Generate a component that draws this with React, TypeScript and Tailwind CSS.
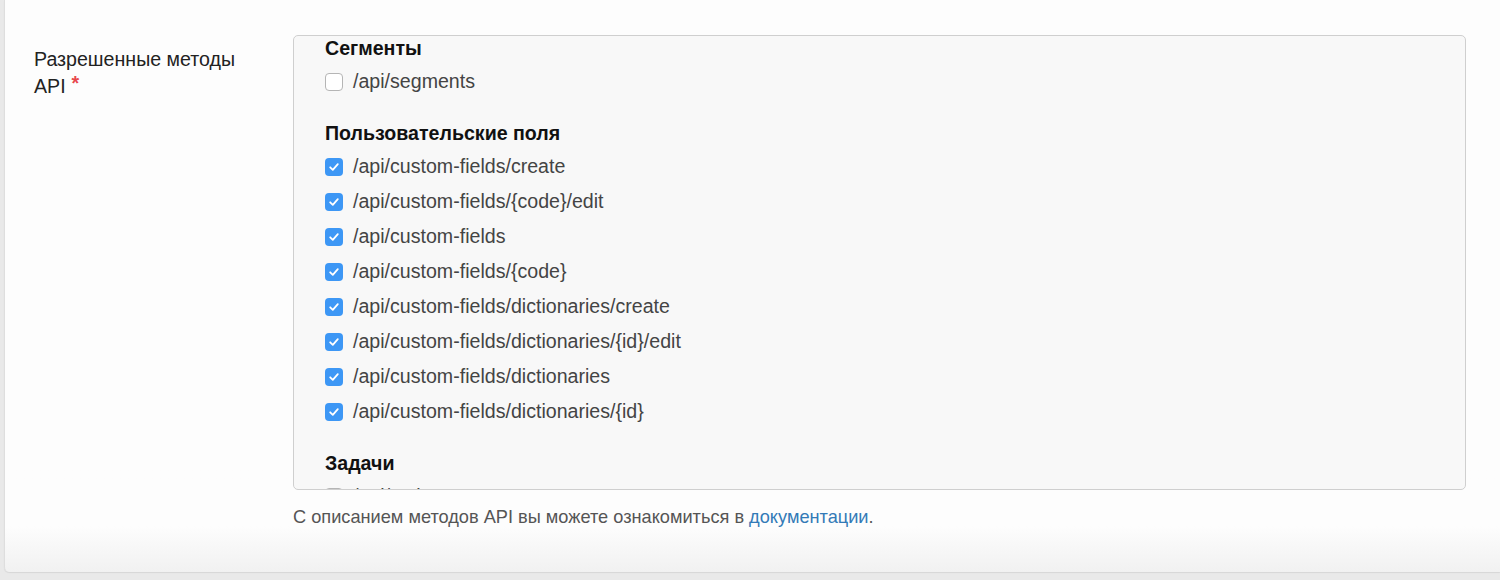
import React from 'react';

interface Group {
  title: string;
  items: { path: string; checked: boolean }[];
}

const groups: Group[] = [
  {
    title: 'Сегменты',
    items: [{ path: '/api/segments', checked: false }],
  },
  {
    title: 'Пользовательские поля',
    items: [
      { path: '/api/custom-fields/create', checked: true },
      { path: '/api/custom-fields/{code}/edit', checked: true },
      { path: '/api/custom-fields', checked: true },
      { path: '/api/custom-fields/{code}', checked: true },
      { path: '/api/custom-fields/dictionaries/create', checked: true },
      { path: '/api/custom-fields/dictionaries/{id}/edit', checked: true },
      { path: '/api/custom-fields/dictionaries', checked: true },
      { path: '/api/custom-fields/dictionaries/{id}', checked: true },
    ],
  },
  {
    title: 'Задачи',
    items: [{ path: '/api/tasks', checked: false }],
  },
];

const CheckBox: React.FC<{ checked: boolean }> = ({ checked }) => {
  if (checked) {
    return (
      <span className="flex h-[18px] w-[18px] shrink-0 items-center justify-center rounded-[4px] bg-[#3d97f5]">
        <svg width="12" height="12" viewBox="0 0 12 12" fill="none">
          <path d="M2.2 6.3 L4.8 8.8 L9.8 3.2" stroke="#fff" strokeWidth="1.8" strokeLinecap="round" strokeLinejoin="round" />
        </svg>
      </span>
    );
  }
  return <span className="h-[18px] w-[18px] shrink-0 rounded-[4px] border border-[#b5b5b5] bg-white" />;
};

const App: React.FC = () => {
  return (
    <div className="h-[580px] overflow-hidden bg-[#e9e9e9] pl-[4px] font-['Liberation_Sans',Arial,sans-serif]">
      <div className="flex h-[572px] rounded-bl-[5px] border-l border-[#dedede] bg-gradient-to-b from-[#fdfdfd] from-[92%] to-[#f1f1f1] pl-[29px] shadow-[0_1px_1px_rgba(0,0,0,0.08)]">
        <div className="w-[259px] shrink-0 pt-[46px]">
          <div className="w-[228px] text-[19.6px] leading-[27px] text-[#222]">
            Разрешенные методы API
            <span className="ml-[6px] inline-block align-top text-[19.6px] leading-[20px] font-bold text-[#e8474c]">*</span>
          </div>
        </div>

        <div className="pt-[35px]">
          <div className="h-[455px] w-[1173px] overflow-hidden rounded-[5px] border border-[#cfcfcf] bg-[#f8f8f8] pl-[31px]">
            {groups.map((group, gi) => (
              <div key={group.title} className={gi === 0 ? '-mt-[2px]' : 'mt-[20px]'}>
                <div className="flex h-[30px] items-center text-[19.6px] font-bold text-[#111]">{group.title}</div>
                {group.items.map((item) => (
                  <label key={item.path} className="flex h-[35px] items-center gap-[10px]">
                    <CheckBox checked={item.checked} />
                    <span className="text-[19.6px] text-[#444]">{item.path}</span>
                  </label>
                ))}
              </div>
            ))}
          </div>
          <p className="mt-[17px] text-[18.2px] leading-[20px] text-[#555]">
            С описанием методов API вы можете ознакомиться в{' '}
            <a className="text-[#337ab7]">документации</a>.
          </p>
        </div>
      </div>
    </div>
  );
};

export default App;
